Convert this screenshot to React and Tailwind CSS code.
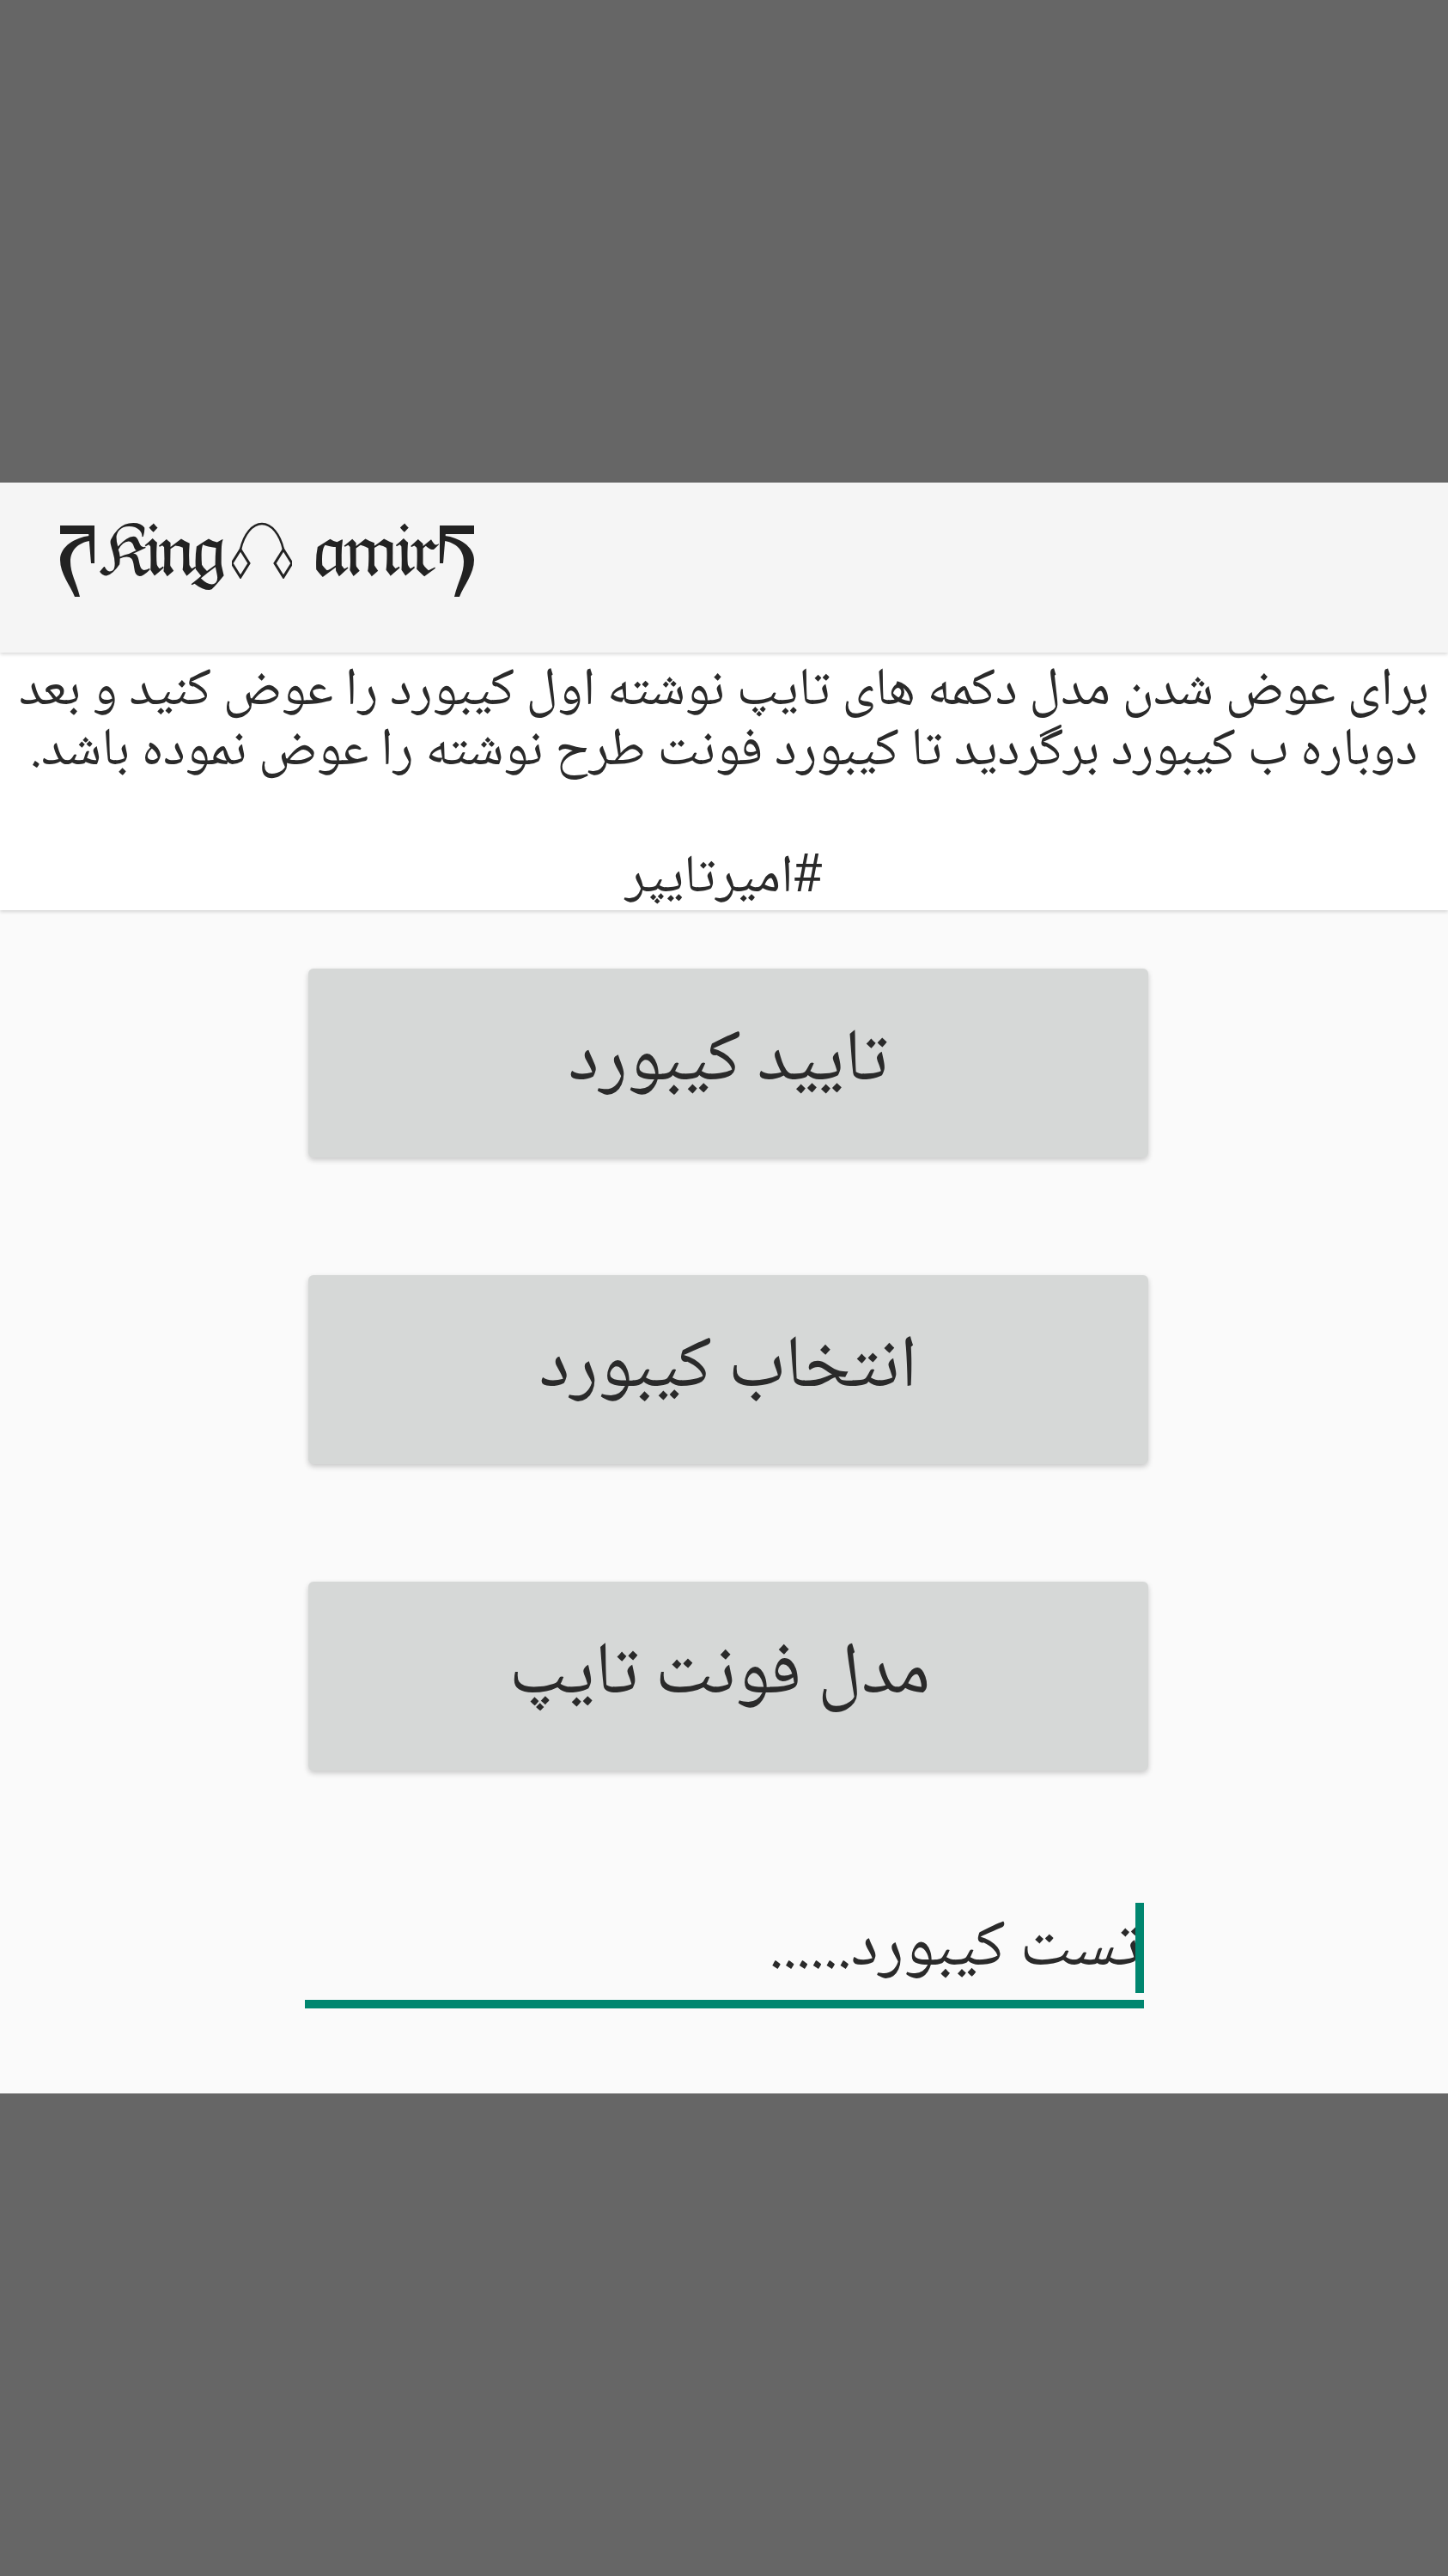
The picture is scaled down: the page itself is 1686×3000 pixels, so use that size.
const ARABIC = "font-['Noto_Naskh_Arabic','Noto_Sans_Arabic','DejaVu_Sans',sans-serif]";
const BLACKLETTER = "font-['DejaVu_Math_TeX_Gyre','Liberation_Serif',serif] mt-[12px] shrink-0 text-[76px] leading-none text-[#222]";

const Bracket = ({ flip }) => (
    <svg viewBox="0 0 40 84" className={`mt-[26px] h-[84px] w-[40px] shrink-0 ${flip ? '-scale-x-100' : ''}`} fill="#222">
        <path d="M0 0H40V10H0Z" />
        <path d="M33 8H40V44H36Z" />
        <path d="M34 12C18 14 0 24 0 40C0 56 12 70 17 83L23 83C19 66 12 56 12 42C12 28 22 20 34 18Z" />
    </svg>
);

const Ornament = () => (
    <svg viewBox="0 0 70 66" className="h-[66px] w-[70px] shrink-0" fill="none" stroke="#222">
        <path d="M10 32C14 14 24 2 35 2C46 2 56 14 60 32" strokeWidth="2.5" />
        <path d="M10 32L20 48L10 64L0 48Z" strokeWidth="3" />
        <path d="M60 32L70 48L60 64L50 48Z" strokeWidth="3" />
    </svg>
);

const ActionButton = ({ label, className = '' }) => (
    <button className={`flex h-[220px] w-[978px] items-center justify-center rounded-[6px] bg-[#d6d8d7] text-[86px] text-[#2a2a2a] shadow-[0_3px_6px_rgba(0,0,0,0.2)] ${ARABIC} ${className}`}>
        {label}
    </button>
);

export default function App() {
    return (
        <div className="flex h-[3000px] w-[1686px] flex-col bg-[#666666] pt-[562px]">
            <header className="relative z-10 flex h-[198px] items-center bg-[#f5f5f5] pb-[40px] pl-[70px] shadow-[0_2px_4px_rgba(0,0,0,0.15)]">
                <Bracket />
                <span className={`w-[160px] tracking-[-18px] ${BLACKLETTER}`}>𝔎𝔦𝔫𝔤</span>
                <Ornament />
                <span className={`ml-[22px] w-[150px] tracking-[-17px] ${BLACKLETTER}`}>𝔞𝔪𝔦𝔯</span>
                <Bracket flip />
            </header>

            <div dir="rtl" className={`relative z-[5] h-[300px] bg-white pt-[12px] text-center text-[62px] leading-[70px] text-[#2a2a2a] shadow-[0_2px_4px_rgba(0,0,0,0.15)] ${ARABIC}`}>
                <p>برای عوض شدن مدل دکمه های تایپ نوشته اول کیبورد را عوض کنید و بعد</p>
                <p>دوباره ب کیبورد برگردید تا کیبورد فونت طرح نوشته را عوض نموده باشد.</p>
                <p className="mt-[78px]">#امیرتایپر</p>
            </div>

            <main className="flex h-[1378px] flex-col bg-[#fafafa] pl-[359px] pt-[68px]">
                <div className="flex flex-col gap-[137px]">
                    <ActionButton label="تایید کیبورد" />
                    <ActionButton label="انتخاب کیبورد" />
                    <ActionButton label="مدل فونت تایپ" className="pr-[20px]" />
                </div>

                <div className="ml-[-4px] mt-[154px] w-[977px] border-b-[10px] border-[#00866f] pb-[8px]">
                    <div className="flex h-[105px] items-center justify-end">
                        <span dir="rtl" className={`mr-[-6px] pt-[6px] text-[77px] leading-none text-[#2a2a2a] ${ARABIC}`}>تست کیبورد......</span>
                        <span className="h-[105px] w-[10px] bg-[#00866f]" />
                    </div>
                </div>
            </main>
        </div>
    );
}
